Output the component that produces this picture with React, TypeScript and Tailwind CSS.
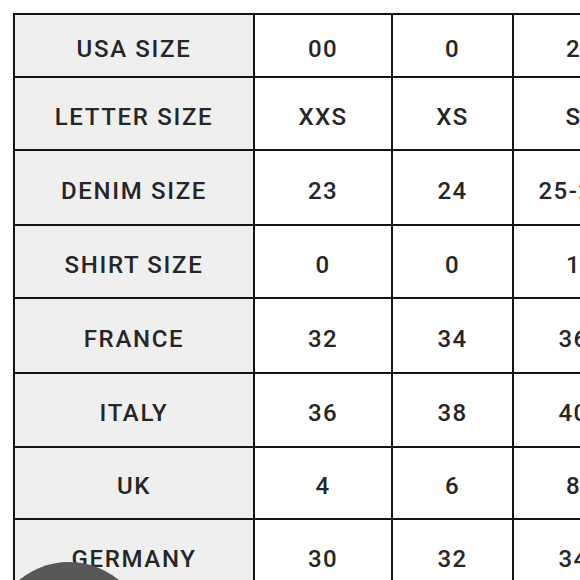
import React from 'react';

type SizeRow = {
  label: string;
  values: string[];
  height: string;
};

// row heights measured off the chart (border included)
const rows: SizeRow[] = [
  { label: 'USA SIZE', values: ['00', '0', '2'], height: 'h-[63px]' },
  { label: 'LETTER SIZE', values: ['XXS', 'XS', 'S'], height: 'h-[73px]' },
  { label: 'DENIM SIZE', values: ['23', '24', '25-26'], height: 'h-[75px]' },
  { label: 'SHIRT SIZE', values: ['0', '0', '1'], height: 'h-[73px]' },
  { label: 'FRANCE', values: ['32', '34', '36'], height: 'h-[75px]' },
  { label: 'ITALY', values: ['36', '38', '40'], height: 'h-[74px]' },
  { label: 'UK', values: ['4', '6', '8'], height: 'h-[72px]' },
  { label: 'GERMANY', values: ['30', '32', '34'], height: 'h-[74px]' },
];

const SizeChart: React.FC = () => {
  return (
    <div className="w-[620px] border-l-2 border-t-2 border-[#141414]">
      {rows.map((row) => (
        <div key={row.label} className={`grid grid-cols-[240px_138px_121px_121px] ${row.height}`}>
          {/* label cell */}
          <div className="flex items-center justify-center border-b-2 border-r-2 border-[#141414] bg-[#efefef] pt-[6px] tracking-[0.07em]">
            {row.label}
          </div>
          {row.values.map((v, i) => (
            <div
              key={i}
              className="flex items-center justify-center border-b-2 border-r-2 border-[#141414] bg-white pt-[6px] tracking-[0.06em] whitespace-nowrap"
            >
              {v}
            </div>
          ))}
        </div>
      ))}
    </div>
  );
};

export default function App() {
  return (
    <div
      className="relative h-[580px] w-[580px] overflow-hidden bg-white pl-[13px] pt-[13px] text-[24px] font-medium leading-none text-[#262626]"
      style={{ fontFamily: 'Roboto, "DejaVu Sans", sans-serif' }}
    >
      <SizeChart />

      {/* round overlay peeking in at the bottom left */}
      <div className="absolute left-[-9px] top-[562px] h-[156px] w-[156px] rounded-full bg-[#585858]" />
    </div>
  );
}
